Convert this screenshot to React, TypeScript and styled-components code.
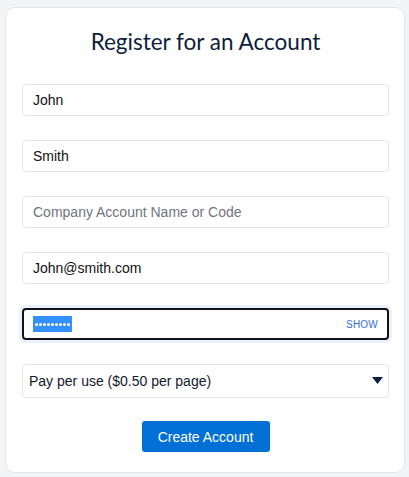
import styled, { createGlobalStyle } from 'styled-components';

const Global = createGlobalStyle`
  html, body {
    margin: 0;
    padding: 0;
    background: #f3f4f6;
  }
  body {
    font-family: "Liberation Sans", Arial, sans-serif;
  }
`

const Page = styled.div`
  padding: 7px 4px 4px 5px;
`

const Card = styled.form`
  box-sizing: border-box;
  width: 400px;
  height: 466px;
  background: #fff;
  border: 1px solid #e1e3e8;
  border-radius: 10px;
  padding: 20px 15px 20px 16px;
  display: flex;
  flex-direction: column;
`

const Title = styled.h1`
  margin: 0 0 28px;
  font-family: Lato, "Open Sans", sans-serif;
  font-weight: 400;
  font-size: 22.5px;
  line-height: 28px;
  text-align: center;
  color: #0c1e3c;
`

const Fields = styled.div`
  display: flex;
  flex-direction: column;
  gap: 24px;
`

const Input = styled.input`
  box-sizing: border-box;
  width: 100%;
  height: 32px;
  margin: 0;
  padding: 0 10px;
  border: 1px solid #e2e4e9;
  border-radius: 4px;
  background: #fff;
  font-family: "Liberation Sans", Arial, sans-serif;
  font-size: 14px;
  color: #111;
  outline: none;

  &::placeholder {
    color: #6f7580;
  }
`

const PasswordBox = styled.div`
  box-sizing: border-box;
  height: 32px;
  padding: 0 9px;
  border: 2px solid #111;
  border-radius: 4px;
  box-shadow: 0 0 0 3px rgba(66, 133, 244, 0.12);
  display: flex;
  align-items: center;
  justify-content: space-between;
`

const Selected = styled.span`
  background: #3390ff;
  height: 16px;
  width: 39px;
  display: flex;
  align-items: center;
  justify-content: space-between;
  padding: 0 2px;
  box-sizing: border-box;
`

const Dot = styled.i`
  width: 3px;
  height: 3px;
  border-radius: 50%;
  background: #fff;
`

const Show = styled.button`
  border: 0;
  background: none;
  padding: 0;
  font-family: "Liberation Sans", Arial, sans-serif;
  font-size: 10px;
  letter-spacing: 0.2px;
  color: #2f6fd6;
`

const SelectWrap = styled.div`
  position: relative;
  margin-top: 24px;
`

const Select = styled.select`
  box-sizing: border-box;
  width: 100%;
  height: 34px;
  padding: 0 6px;
  appearance: none;
  border: 1px solid #e2e4e9;
  border-radius: 4px;
  background: #fff;
  font-family: "Liberation Sans", Arial, sans-serif;
  font-size: 14px;
  color: #111a2e;
  outline: none;
`

const Arrow = styled.svg`
  position: absolute;
  right: 6px;
  top: 13px;
  pointer-events: none;
`

const Button = styled.button`
  align-self: center;
  margin-top: 23px;
  width: 128px;
  height: 31px;
  border: 0;
  border-radius: 3px;
  background: #006fd6;
  color: #fff;
  font-family: "Liberation Sans", Arial, sans-serif;
  font-size: 14px;
`

const App: React.FC = () => {
  return (
    <Page>
      <Global />
      <Card onSubmit={e => e.preventDefault()}>
        <Title>Register for an Account</Title>
        <Fields>
          <Input defaultValue="John" />
          <Input defaultValue="Smith" />
          <Input placeholder="Company Account Name or Code" />
          <Input defaultValue="John@smith.com" />
          <PasswordBox>
            <Selected>
              {Array.from({ length: 9 }).map((_, i) => <Dot key={i} />)}
            </Selected>
            <Show type="button">SHOW</Show>
          </PasswordBox>
        </Fields>
        <SelectWrap>
          <Select defaultValue="ppu">
            <option value="ppu">Pay per use ($0.50 per page)</option>
          </Select>
          <Arrow width="11" height="7" viewBox="0 0 11 7">
            <path d="M0 0 H11 L5.5 7 Z" fill="#0f1f3d" />
          </Arrow>
        </SelectWrap>
        <Button type="submit">Create Account</Button>
      </Card>
    </Page>
  );
};

export default App;
